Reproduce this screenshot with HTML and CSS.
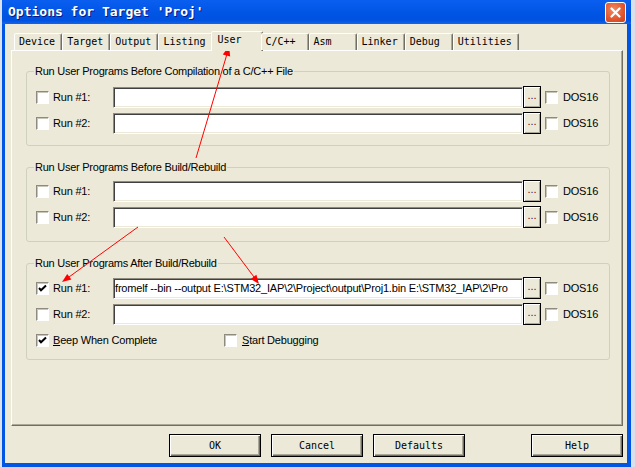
FILE: index.html
```html
<!DOCTYPE html>
<html lang="en">
<head>
  <meta charset="UTF-8">
  <title>Options for Target 'Proj'</title>
  <link rel="stylesheet" href="styles.css">
</head>
<body>

  <div class="window">
    <!-- Title bar -->
    <div class="titlebar">
      <span class="title">Options for Target 'Proj'</span>
      <span class="close">
        <svg width="11" height="11" viewBox="0 0 11 11"><path d="M1.5 1.5 L9.5 9.5 M9.5 1.5 L1.5 9.5" stroke="#fff" stroke-width="2.2" stroke-linecap="round"/></svg>
      </span>
    </div>

    <div class="client">
      <!-- Tabs -->
      <div class="tabs">
        <div class="tab">Device</div>
        <div class="tab">Target</div>
        <div class="tab">Output</div>
        <div class="tab">Listing</div>
        <div class="tab active">User</div>
        <div class="tab">C/C++</div>
        <div class="tab">Asm</div>
        <div class="tab">Linker</div>
        <div class="tab">Debug</div>
        <div class="tab">Utilities</div>
      </div>

      <div class="panel">
        <fieldset class="group">
          <legend>Run User Programs Before Compilation of a C/C++ File</legend>
          <div class="rows">
            <div class="row">
              <span class="run"><span class="box"></span>Run #1:</span>
              <div class="field"></div>
              <span class="browse">...</span>
              <span class="dos"><span class="box"></span>DOS16</span>
            </div>
            <div class="row">
              <span class="run"><span class="box"></span>Run #2:</span>
              <div class="field"></div>
              <span class="browse">...</span>
              <span class="dos"><span class="box"></span>DOS16</span>
            </div>
          </div>
        </fieldset>

        <fieldset class="group mid">
          <legend>Run User Programs Before Build/Rebuild</legend>
          <div class="rows">
            <div class="row">
              <span class="run"><span class="box"></span>Run #1:</span>
              <div class="field"></div>
              <span class="browse">...</span>
              <span class="dos"><span class="box"></span>DOS16</span>
            </div>
            <div class="row">
              <span class="run"><span class="box"></span>Run #2:</span>
              <div class="field"></div>
              <span class="browse">...</span>
              <span class="dos"><span class="box"></span>DOS16</span>
            </div>
          </div>
        </fieldset>

        <fieldset class="group last">
          <legend>Run User Programs After Build/Rebuild</legend>
          <div class="rows">
            <div class="row">
              <span class="run"><span class="box checked"><svg width="11" height="11" viewBox="0 0 11 11"><path d="M2 5 L4 7.2 L9 2.5" fill="none" stroke="#000" stroke-width="2"/></svg></span>Run #1:</span>
              <div class="field">fromelf --bin --output E:\STM32_IAP\2\Project\output\Proj1.bin E:\STM32_IAP\2\Pro</div>
              <span class="browse">...</span>
              <span class="dos"><span class="box"></span>DOS16</span>
            </div>
            <div class="row">
              <span class="run"><span class="box"></span>Run #2:</span>
              <div class="field"></div>
              <span class="browse">...</span>
              <span class="dos"><span class="box"></span>DOS16</span>
            </div>
          </div>
          <div class="opts">
            <span class="beep"><span class="box checked"><svg width="11" height="11" viewBox="0 0 11 11"><path d="M2 5 L4 7.2 L9 2.5" fill="none" stroke="#000" stroke-width="2"/></svg></span><u>B</u>eep When Complete</span>
            <span class="debug"><span class="box"></span><u>S</u>tart Debugging</span>
          </div>
        </fieldset>
      </div>

      <!-- Dialog buttons -->
      <div class="buttons">
        <span class="btn">OK</span>
        <span class="btn">Cancel</span>
        <span class="btn">Defaults</span>
        <span class="btn help">Help</span>
      </div>
    </div>
  </div>

  <!-- Red annotation arrows -->
  <svg class="arrows" width="635" height="467" viewBox="0 0 635 467">
    <g stroke="#f00" stroke-width="1" fill="none">
      <line x1="196" y1="158" x2="227" y2="54"/>
      <line x1="138" y1="227" x2="69" y2="277"/>
      <line x1="224" y1="237" x2="254" y2="277"/>
    </g>
    <g fill="#f00">
      <polygon points="229,46 230.2,56.6 222.8,54.4"/>
      <polygon points="62,282 71.4,279.5 67.2,273.9"/>
      <polygon points="259,284 256.4,274.7 250.8,278.9"/>
    </g>
  </svg>

</body>
</html>
```

FILE: styles.css
```css
/* Reset */
* {
  margin: 0;
  padding: 0;
  box-sizing: border-box;
}

body {
  width: 635px;
  height: 467px;
  position: relative;
  overflow: hidden;
  background: #dbe1ec;
  font-family: "Liberation Sans", Arial, sans-serif;
  font-size: 11px;
  letter-spacing: -0.2px;
  color: #000;
}

/* Window frame */
.window {
  margin-left: 2px;
  width: 629px;
  height: 467px;
  display: flex;
  flex-direction: column;
  background: #0055e5;
}

.titlebar {
  height: 24px;
  display: flex;
  align-items: flex-start;
  background: linear-gradient(to bottom, #0a5ff0, #0055e5 55%, #0052e0 85%, #1563ea);
}

.title {
  padding-left: 6px;
  font: bold 13px/24px "DejaVu Sans Mono", monospace;
  letter-spacing: 0;
  color: #fff;
  text-shadow: 1px 1px #0a1883;
}

.close {
  margin: 2px 5px 0 auto;
  width: 21px;
  height: 21px;
  display: flex;
  align-items: center;
  justify-content: center;
  border: 1px solid #fff;
  border-radius: 3px;
  background: radial-gradient(circle at 40% 35%, #f08a64, #e2552c 60%, #c8421c);
}

.client {
  flex: 1;
  margin: 0 4px 4px 3px;
  padding-top: 7px;
  background: #ece9d8;
}

/* Tabs */
.tabs {
  position: relative;
  z-index: 1;
  display: flex;
  align-items: flex-end;
  height: 19px;
  padding-left: 9px;
}

.tab {
  height: 17px;
  min-width: 48px;
  padding: 0 6px 0 4px;
  border: 1px solid;
  border-bottom: none;
  border-color: #fff #716f64 transparent #fff;
  border-radius: 2px 2px 0 0;
  box-shadow: inset -1px 0 #aca899;
  background: #ece9d8;
  font: 10px/16px "DejaVu Sans Mono", monospace;
  letter-spacing: 0;
  white-space: nowrap;
}

.tab.active {
  height: 20px;
  min-width: 52px;
  margin: 0 -2px -1px;
  padding: 0 8px 0 6px;
}

/* Tab page */
.panel {
  margin-left: 6px;
  width: 612px;
  height: 376px;
  padding: 13px 12px 0 14px;
  border: 1px solid;
  border-color: #fff #716f64 #716f64 #fff;
  box-shadow: inset -1px -1px #aca899;
}

.group {
  border: 1px solid #d0d0bf;
  border-radius: 3px;
  padding: 8px 0 11px 9px;
  margin-bottom: 14px;
}

.group.mid {
  padding-top: 6px;
  padding-bottom: 13px;
}

.group.last {
  padding-top: 7px;
  padding-bottom: 9px;
}

.group legend {
  padding: 0 1px;
  margin-left: -2px;
  line-height: 14px;
  letter-spacing: -0.25px;
}

.rows {
  display: flex;
  flex-direction: column;
  gap: 4px;
}

.row {
  display: flex;
  align-items: center;
  height: 22px;
}

.run {
  width: 77px;
  display: flex;
  align-items: center;
}

.box {
  flex: none;
  width: 13px;
  height: 13px;
  margin-right: 4px;
  display: flex;
  align-items: center;
  justify-content: center;
  background: #fff;
  border: 1px solid;
  border-color: #8e8b7e #fff #fff #8e8b7e;
  box-shadow: inset 1px 1px #c9c6b8;
}

.field {
  align-self: flex-end;
  width: 410px;
  height: 21px;
  padding: 0 1px;
  background: #fff;
  border: 1px solid;
  border-color: #8e8b7e #fff #fff #8e8b7e;
  box-shadow: inset 1px 1px #404040, inset -1px -1px #ece9d8;
  line-height: 19px;
  letter-spacing: -0.18px;
  white-space: nowrap;
  overflow: hidden;
}

.browse {
  width: 18px;
  height: 22px;
  border: 1px solid #000;
  background: #ece9d8;
  box-shadow: inset 1px 1px #fff, inset -1px -1px #aca899;
  text-align: center;
  line-height: 16px;
  letter-spacing: 0;
  color: #5a1030;
}

.dos {
  margin-left: 4px;
  display: flex;
  align-items: center;
}

.dos .box {
  margin-right: 5px;
}

.opts {
  display: flex;
  align-items: center;
  height: 20px;
  margin-top: 5px;
}

.beep {
  width: 188px;
  display: flex;
  align-items: center;
}

.debug {
  display: flex;
  align-items: center;
}

.debug .box {
  margin-right: 5px;
}

/* Dialog buttons */
.buttons {
  display: flex;
  gap: 10px;
  height: 23px;
  margin-top: 8px;
  padding: 0 4px 0 164px;
}

.btn {
  width: 92px;
  height: 23px;
  border: 1px solid #000;
  background: #ece9d8;
  box-shadow: inset 1px 1px #fff, inset -1px -1px #716f64, inset -2px -2px #aca899;
  font: 10px/21px "DejaVu Sans Mono", monospace;
  letter-spacing: 0;
  text-align: center;
}

.btn.help {
  margin-left: auto;
}

/* Annotation overlay */
.arrows {
  position: absolute;
  top: 0;
  left: 0;
  pointer-events: none;
}
```
